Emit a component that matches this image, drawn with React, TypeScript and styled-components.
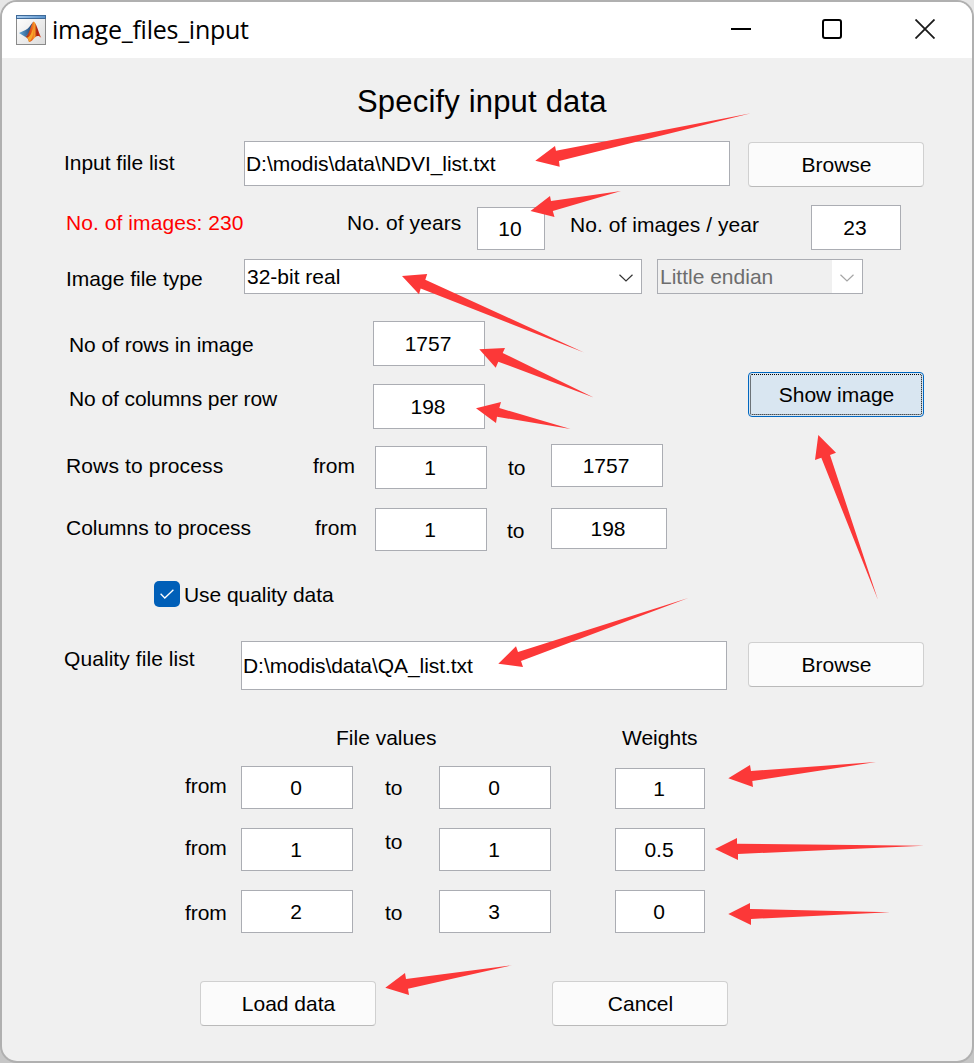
import React from "react";
import styled, { createGlobalStyle, css } from "styled-components";

const GlobalStyle = createGlobalStyle`
  *, *::before, *::after { box-sizing: border-box; }
  html, body { margin: 0; padding: 0; }
  body { overflow: hidden; font-family: "Liberation Sans", Arial, sans-serif; }
`;

/* Strip of desktop that shows around the window, with the fragments behind it */
const Desktop = styled.div`
  position: relative;
  width: 974px;
  height: 1063px;
  padding: 2px;
  background:
    linear-gradient(#2f5f96, #2f5f96) 0 822px / 2px 26px no-repeat,
    linear-gradient(#555, #555) 0 733px / 2px 1px no-repeat,
    linear-gradient(#3b76b0, #3b76b0) 0 382px / 2px 6px no-repeat,
    linear-gradient(#777, #777) 0 870px / 2px 1px no-repeat,
    linear-gradient(#777, #777) 0 940px / 2px 1px no-repeat,
    linear-gradient(#2f5f96, #2f5f96) 0 984px / 2px 2px no-repeat,
    linear-gradient(#777, #777) 0 1017px / 2px 1px no-repeat,
    linear-gradient(#3b76b0, #3b76b0) 972px 652px / 2px 14px no-repeat,
    linear-gradient(#777, #777) 972px 837px / 2px 1px no-repeat,
    linear-gradient(#e6e6e6, #e6e6e6 20px, #b2b2b2 30px, #a0a0a0 1030px, #c6c6c6 1045px);
`;

const Window = styled.main`
  width: 970px;
  height: 1059px;
  border-radius: 15px;
  overflow: hidden;
  background: #f0f0f0;
  box-shadow: 0 0 0 2px #b0b0b0;
`;

const TitleBar = styled.header`
  display: flex;
  align-items: center;
  height: 56px;
  padding-left: 13px;
  background: #fff;
`;

const TitleText = styled.h1`
  flex: 1;
  margin: 0 0 2px 5px;
  font: 400 25px/34px "Open Sans", "Noto Sans", sans-serif;
  letter-spacing: -0.25px;
  color: #000;
`;

const WindowButtons = styled.div`
  display: flex;
  gap: 71px;
  padding: 0 37px 2px 0;
  svg { display: block; }
  svg:last-child { margin-left: 2px; }
`;

const Row = styled.div<{ $h: number }>`
  display: flex;
  align-items: flex-start;
  height: ${(p) => p.$h}px;
`;

const Column = styled.div<{ $w: number }>`
  width: ${(p) => p.$w}px;
`;

interface Place {
  $gap: number;
  $drop: number;
}

const placed = css<Place>`
  flex: none;
  margin: ${(p) => p.$drop}px 0 0 ${(p) => p.$gap}px;
`;

const Heading = styled.h2<Place>`
  ${placed}
  font-size: 31px;
  font-weight: 400;
  line-height: 36px;
  letter-spacing: 0.18px;
  white-space: nowrap;
`;

const Label = styled.span<Place & { $w: number; $red?: boolean; $track?: number }>`
  ${placed}
  width: ${(p) => p.$w}px;
  font-size: 21px;
  line-height: 24px;
  letter-spacing: ${(p) => p.$track ?? 0}px;
  white-space: nowrap;
  color: ${(p) => (p.$red ? "#ff0000" : "#000")};
`;

const Box = styled.div<Place & { $w: number; $h: number; $left?: boolean }>`
  ${placed}
  display: flex;
  align-items: center;
  justify-content: ${(p) => (p.$left ? "flex-start" : "center")};
  width: ${(p) => p.$w}px;
  height: ${(p) => p.$h}px;
  padding: ${(p) => (p.$left ? "1px 0 0 1px" : "1px 2px 0 0")};
  border: 1px solid #abadb3;
  background: #fff;
  font-size: 21px;
  line-height: 24px;
  letter-spacing: ${(p) => (p.$left ? "-0.05px" : "0")};
  white-space: nowrap;
`;

const Select = styled.div<Place & { $w: number; $disabled?: boolean }>`
  ${placed}
  display: flex;
  align-items: stretch;
  justify-content: space-between;
  width: ${(p) => p.$w}px;
  height: 35px;
  border: 1px solid #abadb3;
  background: ${(p) => (p.$disabled ? "#f0f0f0" : "#fff")};
  color: ${(p) => (p.$disabled ? "#6d6d6d" : "#000")};
  font-size: 21px;
  line-height: 34px;
  padding-left: 2px;
`;

const SelectArrow = styled.span`
  display: flex;
  align-items: center;
  justify-content: center;
  width: 30px;
  padding-top: 2px;
  background: #fff;
`;

const Button = styled.button<Place & { $focused?: boolean }>`
  ${placed}
  width: 176px;
  height: 45px;
  padding: 1px 0 0 1px;
  border: 1px solid ${(p) => (p.$focused ? "#0067c0" : "#d0d0d0")};
  border-bottom-color: ${(p) => (p.$focused ? "#0067c0" : "#bababa")};
  border-radius: 4px;
  background: ${(p) => (p.$focused ? "#d9e6f1" : "#fbfbfb")};
  color: #000;
  font: 21px/24px "Liberation Sans", Arial, sans-serif;
  ${(p) => p.$focused && "outline: 1px dotted #000; outline-offset: -3px;"}
`;

const CheckMark = styled.span<Place>`
  ${placed}
  display: flex;
  align-items: center;
  justify-content: center;
  width: 26px;
  height: 26px;
  border-radius: 5px;
  background: #005fb8;
`;

const Annotations = styled.svg`
  position: absolute;
  top: 0;
  left: 0;
  pointer-events: none;
`;

const arrows = [
  "535.3,160.7 555,146 556,150.7 751,113.3 559,161 559.7,166.8",
  "530.5,211 550,196 551,201 621,191.1 552.8,211 554.5,217",
  "402,276 427.2,274 425.3,279.7 584,352.400 420.7,288.5 419,294.3",
  "479.3,349.3 505,348 502.7,353 593.7,397.400 498.3,361.7 495.7,367.7",
  "476,408.3 501,402 499.3,408 570.5,429 497,416.7 496,423",
  "818.3,435 836,452.7 830,455 878,600 821.3,457.7 815,460",
  "498.3,663.7 516,646.3 518,652 688.3,598 521,661 523,667",
  "728.3,778.3 750,765 751,771 876,762 752.3,781 753,787",
  "715,849 737,838 737,843.7 924,845.7 738,854 738,860",
  "728.3,914 750,903 750,909 890,912.3 751,919 751,925",
  "385.3,987.7 405,973 406,979 512,965.2 408,988.7 409,995",
];

const weights = [
  { from: "0", to: "0", weight: "1", h: 60, fromDrop: 14, boxDrop: 6, toDrop: 16, weightDrop: 8, weightH: 41 },
  { from: "1", to: "1", weight: "0.5", h: 62, fromDrop: 16, boxDrop: 8, toDrop: 10, weightDrop: 8, weightH: 43 },
  { from: "2", to: "3", weight: "0", h: 68, fromDrop: 19, boxDrop: 8, toDrop: 19, weightDrop: 8, weightH: 43 },
];

function MatlabIcon() {
  return (
    <svg width="32" height="32" viewBox="0 0 32 32">
      <defs>
        <linearGradient id="bar" x1="0" x2="1">
          <stop offset="0" stopColor="#a9cdf0" />
          <stop offset="1" stopColor="#5b93cb" />
        </linearGradient>
        <linearGradient id="page" x1="0" y1="0" x2="1" y2="1">
          <stop offset="0" stopColor="#fff" />
          <stop offset="1" stopColor="#dcdcdc" />
        </linearGradient>
        <linearGradient id="blue" x1="0" x2="1">
          <stop offset="0" stopColor="#5fa8d8" />
          <stop offset="1" stopColor="#1f3f70" />
        </linearGradient>
        <linearGradient id="flame" x1="0" x2="1">
          <stop offset="0" stopColor="#8a2a14" />
          <stop offset=".35" stopColor="#e8551a" />
          <stop offset=".58" stopColor="#f59a2a" />
          <stop offset=".72" stopColor="#a81c10" />
          <stop offset="1" stopColor="#e04a20" />
        </linearGradient>
      </defs>
      <rect x="1.5" y="1.5" width="29" height="29" fill="url(#page)" stroke="#8a8a8a" />
      <rect x="1.5" y="1.5" width="29" height="3" fill="url(#bar)" stroke="#3f6a98" />
      <path d="M4 19 L10.500 16 C14 14.500 15.500 11 18 8 L15.500 18 L10.500 23 Z" fill="url(#blue)" />
      <path d="M10.500 23 C14.500 20.500 15.500 11 18.500 7.500 C21 8 23 17 26.300 24 C24 21.500 22 21.500 20 23.500 C18 25.500 16.500 28 14 28 C13.500 25.500 12.500 23.500 10.500 23 Z" fill="url(#flame)" />
      <path d="M12 23.500 C15 23.500 17 18 18.500 13 C19 19 17.500 25.500 14 28 C13.500 25.800 13 24.500 12 23.500 Z" fill="#f7a52b" />
    </svg>
  );
}

function Chevron({ color }: { color: string }) {
  return (
    <svg width="14" height="8" viewBox="0 0 14 8" fill="none" stroke={color} strokeWidth="1.2">
      <path d="M0.5 0.8 L7 7 L13.500 0.8" />
    </svg>
  );
}

export default function App() {
  return (
    <Desktop>
      <GlobalStyle />
      <Window>
        <TitleBar>
          <MatlabIcon />
          <TitleText>image_files_input</TitleText>
          <WindowButtons>
            <svg width="20" height="20" viewBox="0 0 20 20">
              <path d="M0 10H20" stroke="#000" strokeWidth="2" />
            </svg>
            <svg width="20" height="20" viewBox="0 0 20 20">
              <rect x="1" y="1" width="18" height="18" rx="2" fill="none" stroke="#000" strokeWidth="2" />
            </svg>
            <svg width="20" height="20" viewBox="0 0 20 20">
              <path d="M0.500 0.500L19.500 19.500M19.500 0.500L0.500 19.500" stroke="#1a1a1a" strokeWidth="1.8" />
            </svg>
          </WindowButtons>
        </TitleBar>

        <Row $h={70}>
          <Heading $gap={355} $drop={26}>Specify input data</Heading>
        </Row>

        <Row $h={68}>
          <Label $gap={62} $drop={23} $w={149} $track={-0.03}>Input file list</Label>
          <Box $gap={31} $drop={13} $w={486} $h={45} $left>D:\modis\data\NDVI_list.txt</Box>
          <Button $gap={18} $drop={14}>Browse</Button>
        </Row>

        <Row $h={60}>
          <Label $gap={64} $drop={15} $w={198} $track={0.07} $red>No. of images: 230</Label>
          <Label $gap={83} $drop={15} $w={118} $track={0.1}>No. of years</Label>
          <Box $gap={12} $drop={11} $w={68} $h={43}>10</Box>
          <Label $gap={25} $drop={17} $w={198} $track={0.06}>No. of images / year</Label>
          <Box $gap={43} $drop={9} $w={90} $h={45}>23</Box>
        </Row>

        <Row $h={52}>
          <Label $gap={64} $drop={11} $w={149}>Image file type</Label>
          <Select $gap={29} $drop={3} $w={398}>
            32-bit real
            <SelectArrow><Chevron color="#333" /></SelectArrow>
          </Select>
          <Select $gap={15} $drop={3} $w={206} $disabled>
            Little endian
            <SelectArrow><Chevron color="#a5a5a5" /></SelectArrow>
          </Select>
        </Row>

        <Row $h={127}>
          <Column $w={660}>
            <Row $h={67}>
              <Label $gap={67} $drop={25} $w={228} $track={-0.05}>No of rows in image</Label>
              <Box $gap={76} $drop={13} $w={112} $h={45}>1757</Box>
            </Row>
            <Row $h={60}>
              <Label $gap={67} $drop={12} $w={228} $track={-0.09}>No of columns per row</Label>
              <Box $gap={76} $drop={9} $w={112} $h={45}>198</Box>
            </Row>
          </Column>
          <Button $gap={86} $drop={64} $focused>Show image</Button>
        </Row>

        <Row $h={65}>
          <Label $gap={64} $drop={19} $w={198} $track={0.14}>Rows to process</Label>
          <Label $gap={49} $drop={19} $w={49}>from</Label>
          <Box $gap={13} $drop={11} $w={112} $h={43}>1</Box>
          <Label $gap={21} $drop={21} $w={30}>to</Label>
          <Box $gap={13} $drop={9} $w={112} $h={43}>1757</Box>
        </Row>

        <Row $h={65}>
          <Label $gap={64} $drop={16} $w={198} $track={-0.03}>Columns to process</Label>
          <Label $gap={51} $drop={16} $w={47}>from</Label>
          <Box $gap={13} $drop={8} $w={112} $h={43}>1</Box>
          <Label $gap={20} $drop={19} $w={31}>to</Label>
          <Box $gap={13} $drop={8} $w={116} $h={41}>198</Box>
        </Row>

        <Row $h={60}>
          <CheckMark $gap={152} $drop={16}>
            <svg width="14" height="10" viewBox="0 0 14 10" fill="none" stroke="#fff" strokeWidth="1.3">
              <path d="M0.600 4.800 L4.800 9 L13.400 0.700" />
            </svg>
          </CheckMark>
          <Label $gap={4} $drop={18} $w={170} $track={-0.06}>Use quality data</Label>
        </Row>

        <Row $h={85}>
          <Label $gap={62} $drop={22} $w={149} $track={0.07}>Quality file list</Label>
          <Box $gap={28} $drop={16} $w={486} $h={49} $left>D:\modis\data\QA_list.txt</Box>
          <Button $gap={21} $drop={17}>Browse</Button>
        </Row>

        <Row $h={50}>
          <Label $gap={334} $drop={16} $w={130}>File values</Label>
          <Label $gap={156} $drop={16} $w={90}>Weights</Label>
        </Row>

        {weights.map((w) => (
          <Row key={w.weight} $h={w.h}>
            <Label $gap={183} $drop={w.fromDrop} $w={50} $track={-0.1}>from</Label>
            <Box $gap={6} $drop={w.boxDrop} $w={112} $h={43}>{w.from}</Box>
            <Label $gap={32} $drop={w.toDrop} $w={30}>to</Label>
            <Box $gap={24} $drop={w.boxDrop} $w={112} $h={43}>{w.to}</Box>
            <Box $gap={64} $drop={w.weightDrop} $w={90} $h={w.weightH}>{w.weight}</Box>
          </Row>
        ))}

        <Row $h={110}>
          <Button $gap={198} $drop={31}>Load data</Button>
          <Button $gap={176} $drop={31}>Cancel</Button>
        </Row>
      </Window>

      <Annotations width="974" height="1063" viewBox="0 0 974 1063">
        {arrows.map((points) => (
          <polygon key={points} points={points} fill="#fc3838" />
        ))}
      </Annotations>
    </Desktop>
  );
}
